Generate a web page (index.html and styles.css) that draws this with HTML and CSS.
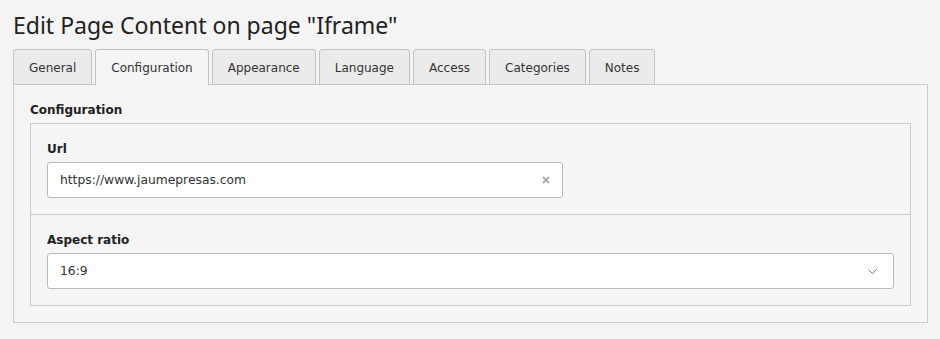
FILE: index.html
```html
<!DOCTYPE html>
<html lang="en">
<head>
    <meta charset="UTF-8">
    <meta name="viewport" content="width=device-width, initial-scale=1.0">
    <title>Edit Page Content</title>
    <link rel="stylesheet" href="styles.css">
</head>
<body>
  <h1 class="page-title">Edit Page Content on page "Iframe"</h1>

  <ul class="tabs">
    <li class="tab">General</li>
    <li class="tab active">Configuration</li>
    <li class="tab">Appearance</li>
    <li class="tab">Language</li>
    <li class="tab">Access</li>
    <li class="tab">Categories</li>
    <li class="tab">Notes</li>
  </ul>

  <div class="panel">
    <h4 class="section-title">Configuration</h4>
    <div class="fieldset">
      <div class="field">
        <label class="field-label">Url</label>
        <div class="input-wrap short">
          <input class="text-input" type="text" value="https://www.jaumepresas.com">
          <svg class="clear" width="8" height="8" viewBox="0 0 8 8">
            <path d="M1 1 L7 7 M7 1 L1 7" stroke="#aaa" stroke-width="1.8"/>
          </svg>
        </div>
      </div>
      <div class="field">
        <label class="field-label">Aspect ratio</label>
        <div class="input-wrap">
          <div class="select">16:9</div>
          <svg class="chevron" width="9" height="5" viewBox="0 0 9 5">
            <path d="M0.5 0.5 L4.5 4.5 L8.5 0.5" fill="none" stroke="#777" stroke-width="1"/>
          </svg>
        </div>
      </div>
    </div>
  </div>
</body>
</html>
```

FILE: styles.css
```css
body {
  margin: 0;
  padding: 0 12px 0 13px;
  background-color: #f4f4f4;
  font-family: 'DejaVu Sans', Verdana, sans-serif;
  font-size: 12px;
  color: #333;
}

.page-title {
  margin: 0;
  padding-top: 9px;
  height: 40px;
  font-family: 'Noto Sans', sans-serif;
  font-weight: 400;
  font-size: 23px;
  line-height: 32px;
  color: #212121;
}

.tabs {
  list-style: none;
  margin: 0 0 -1px 0;
  padding: 0;
  display: flex;
  gap: 3px;
  position: relative;
}

.tab {
  height: 34px;
  line-height: 36px;
  padding: 0 15px;
  background-color: #ebebeb;
  border: 1px solid #c3c3c3;
  border-radius: 3px 3px 0 0;
  color: #333;
}

.tab.active {
  background-color: #f5f5f5;
  border-bottom-color: #f5f5f5;
  height: 35px;
  margin-bottom: -1px;
}

.panel {
  background-color: #f5f5f5;
  border: 1px solid #cacaca;
  padding: 16px;
}

.section-title {
  margin: 0 0 4px 0;
  font-size: 12px;
  line-height: 18px;
  font-weight: bold;
  color: #212121;
}

.fieldset {
  border: 1px solid #cacaca;
}

.field {
  padding: 16px;
}

.field + .field {
  border-top: 1px solid #cacaca;
}

.field-label {
  display: block;
  margin-bottom: 4px;
  line-height: 18px;
  font-weight: bold;
  color: #212121;
}

.input-wrap {
  position: relative;
}

.input-wrap.short {
  width: 516px;
}

.text-input,
.select {
  box-sizing: border-box;
  display: block;
  width: 100%;
  height: 36px;
  padding: 0 12px;
  background-color: #fff;
  border: 1px solid #bbb;
  border-radius: 3px;
  font-family: inherit;
  font-size: 12.3px;
  line-height: 34px;
  color: #333;
  outline: none;
}

.clear {
  position: absolute;
  right: 13px;
  top: 14px;
}

.chevron {
  position: absolute;
  right: 17px;
  top: 16px;
}
```
